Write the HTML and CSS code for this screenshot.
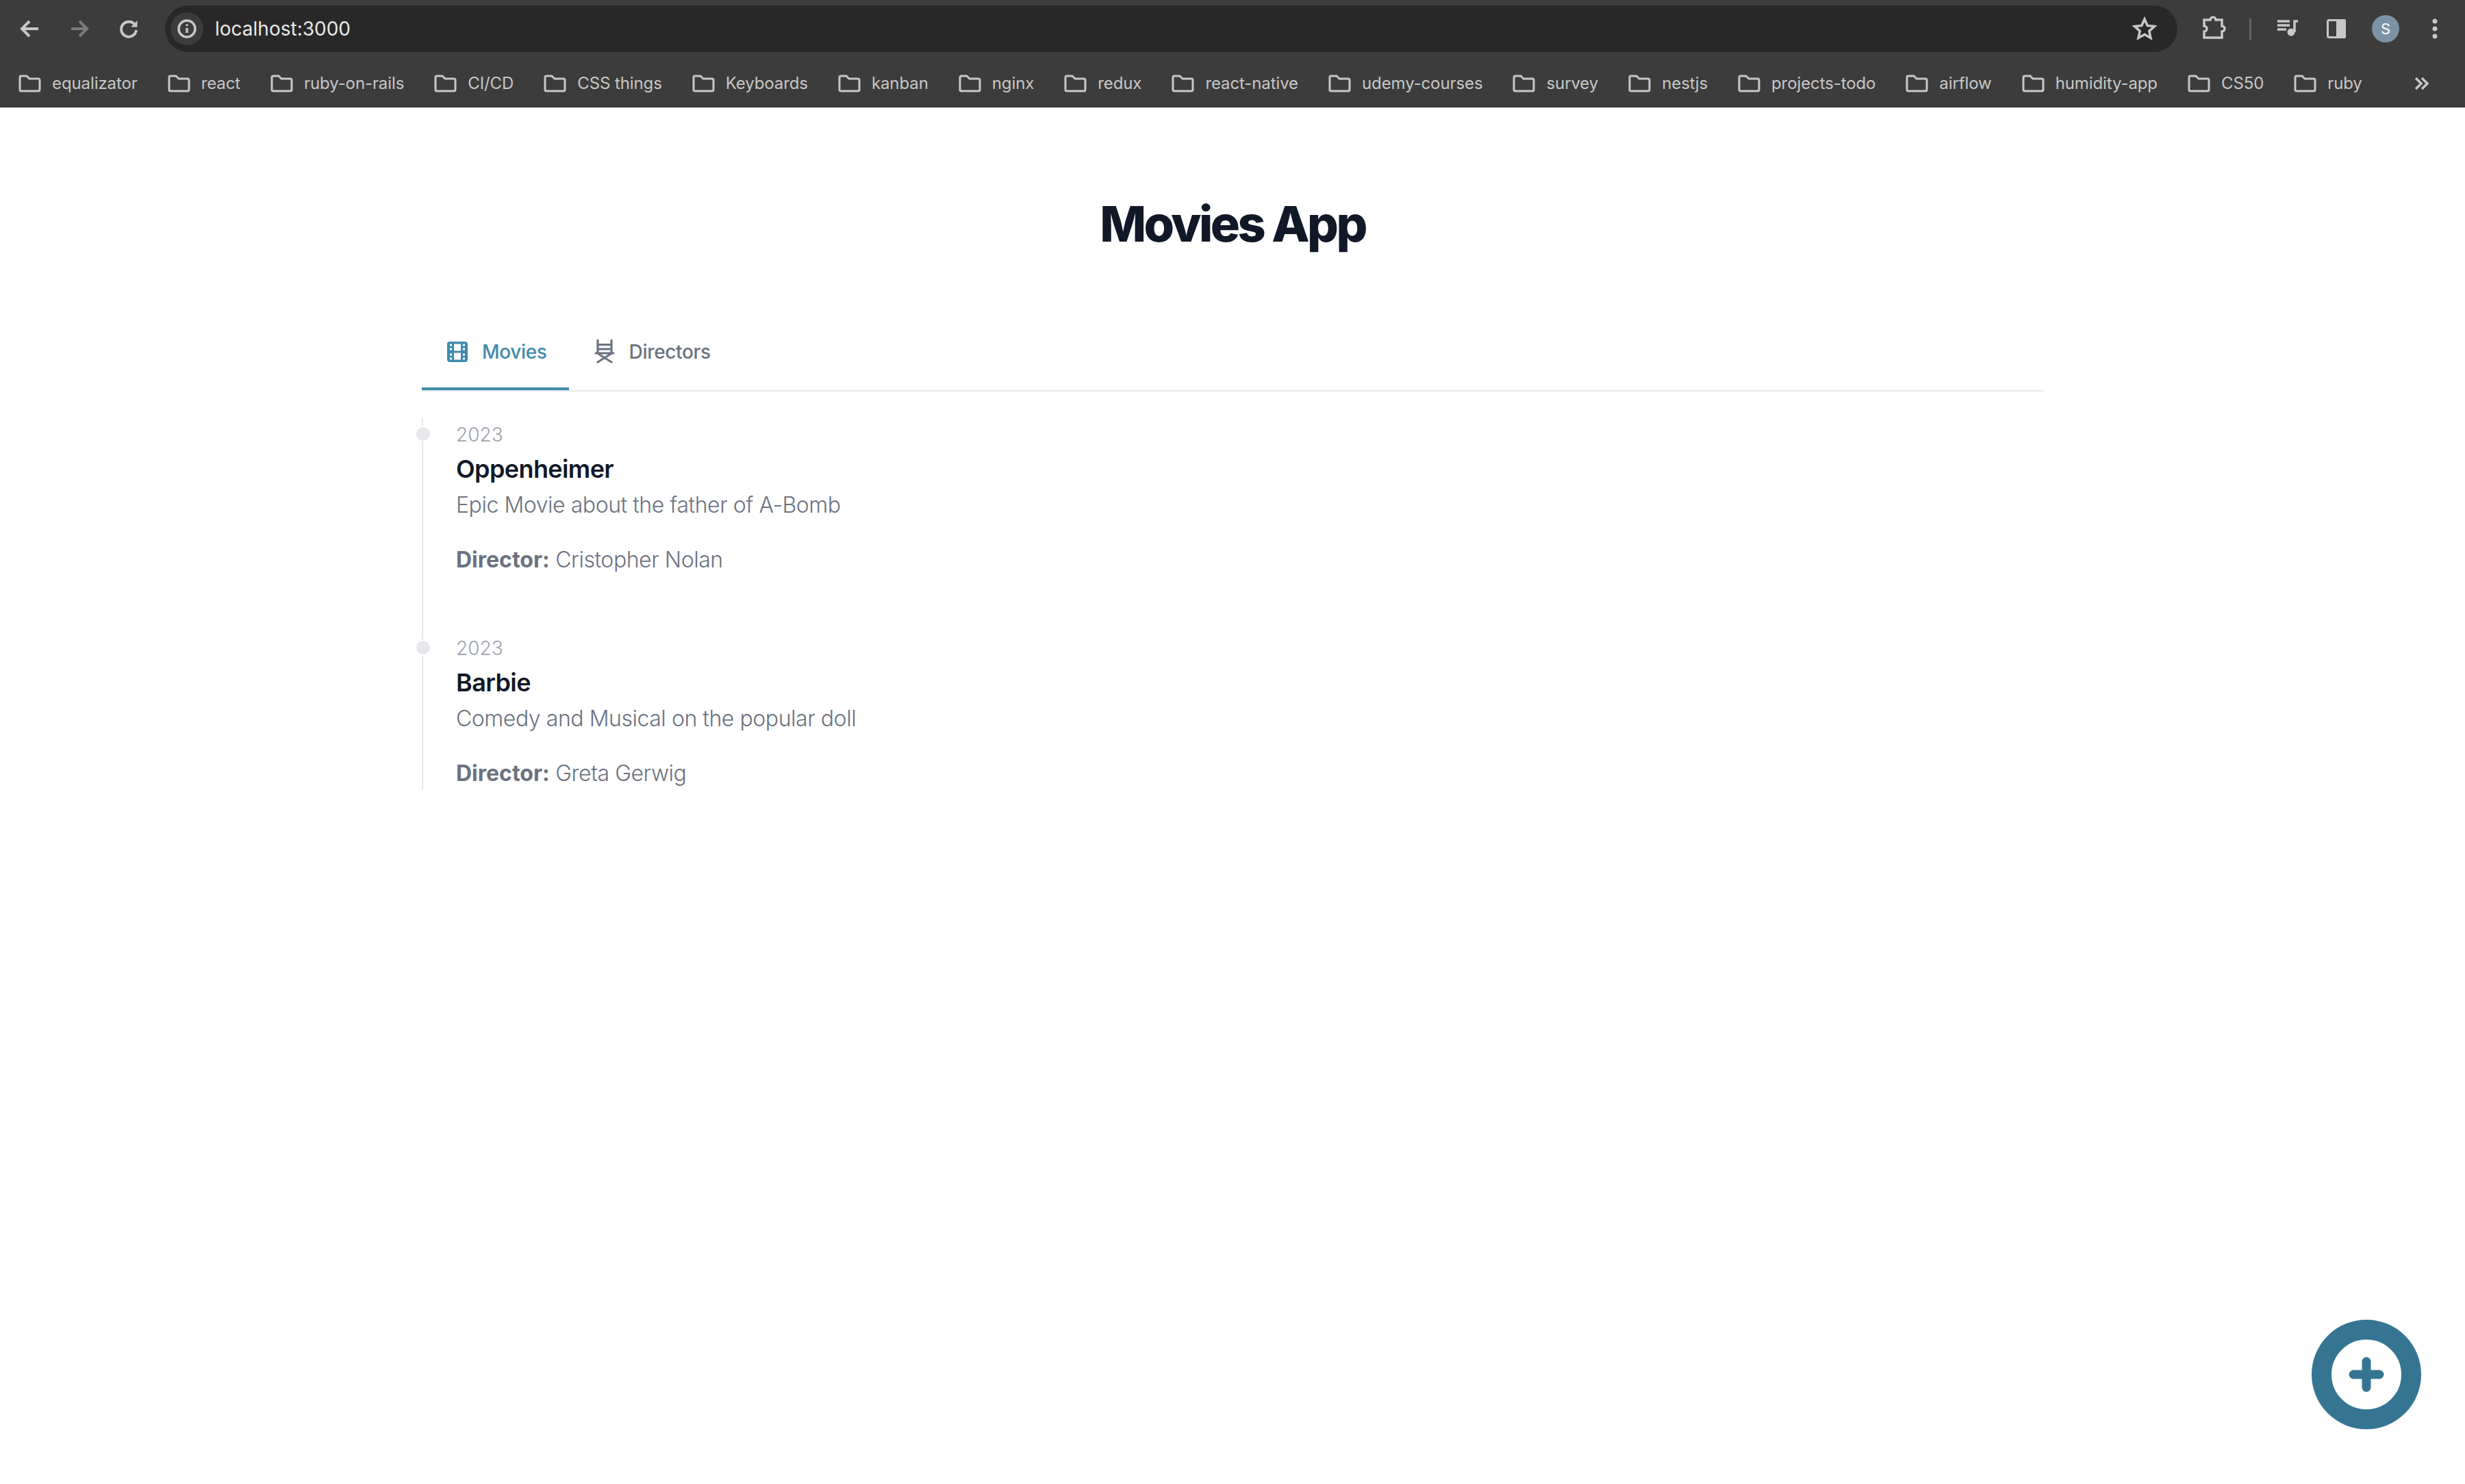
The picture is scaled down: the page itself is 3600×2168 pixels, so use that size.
FILE: index.html
```html
<!DOCTYPE html>
<html lang="en">
<head>
    <meta charset="UTF-8">
    <meta name="viewport" content="width=device-width, initial-scale=1.0">
    <title>Movies App</title>
    <link rel="stylesheet" href="styles.css">
</head>
<body>
    <!-- browser chrome -->
    <div class="browser">
        <div class="toolbar">
            <div class="tool">
                <svg width="40" height="40" viewBox="0 0 40 40" class="stroke"><path d="M32 20H10M19 9 8 20l11 11"/></svg>
            </div>
            <div class="tool dim">
                <svg width="40" height="40" viewBox="0 0 40 40" class="stroke"><path d="M8 20h22M20 9l11 11-11 11"/></svg>
            </div>
            <div class="tool">
                <svg width="40" height="40" viewBox="0 0 40 40" class="stroke"><path d="M29.500 15a11 11 0 1 0 1.500 7"/><path class="solid" d="M32.500 8v9.500H23z"/></svg>
            </div>
            <div class="omnibox">
                <span class="site-info">
                    <svg width="30" height="30" viewBox="0 0 30 30" class="stroke thin"><circle cx="15" cy="15" r="12"/><path d="M15 14v7"/><path d="M15 8.500v2.400"/></svg>
                </span>
                <span class="url">localhost:3000</span>
                <svg class="star stroke thin" width="36" height="36" viewBox="0 0 36 36"><path d="m18 4 4.200 9.400 10.300 1.100-7.700 6.900 2.200 10.100-9-5.200-9 5.200 2.200-10.100-7.700-6.900 10.300-1.100z"/></svg>
            </div>
            <div class="tool">
                <svg width="40" height="40" viewBox="0 0 40 40" class="stroke thin"><path d="M6 7h9a4 4 0 0 1 8 0h9v9a4 4 0 0 1 0 8v9H6v-9a4 4 0 0 0 0-8z"/></svg>
            </div>
            <div class="tool-sep"></div>
            <div class="tool">
                <svg width="40" height="40" viewBox="0 0 40 40" class="stroke thin"><path d="M6 9h18M6 15h18M6 21h13"/><path d="M31 25V9h5"/><circle class="solid" cx="26" cy="25" r="5.500"/></svg>
            </div>
            <div class="tool">
                <svg width="40" height="40" viewBox="0 0 40 40"><rect class="panel-frame" x="7.500" y="7.500" width="25" height="25" rx="2"/><rect class="solid" x="20" y="6" width="14" height="28" rx="2"/></svg>
            </div>
            <div class="tool"><span class="avatar">S</span></div>
            <div class="tool">
                <svg width="40" height="40" viewBox="0 0 40 40"><circle class="solid" cx="20" cy="9" r="3.500"/><circle class="solid" cx="20" cy="20" r="3.500"/><circle class="solid" cx="20" cy="31" r="3.500"/></svg>
            </div>
        </div>

        <div class="bookmarks" id="bookmarks">
            <a class="bookmark"><svg class="folder" viewBox="0 0 33 26"><path d="M2 4a2 2 0 0 1 2-2h8l4 4h13a2 2 0 0 1 2 2v14a2 2 0 0 1-2 2H4a2 2 0 0 1-2-2z"/></svg>equalizator</a>
            <a class="bookmark"><svg class="folder" viewBox="0 0 33 26"><path d="M2 4a2 2 0 0 1 2-2h8l4 4h13a2 2 0 0 1 2 2v14a2 2 0 0 1-2 2H4a2 2 0 0 1-2-2z"/></svg>react</a>
            <a class="bookmark"><svg class="folder" viewBox="0 0 33 26"><path d="M2 4a2 2 0 0 1 2-2h8l4 4h13a2 2 0 0 1 2 2v14a2 2 0 0 1-2 2H4a2 2 0 0 1-2-2z"/></svg>ruby-on-rails</a>
            <a class="bookmark"><svg class="folder" viewBox="0 0 33 26"><path d="M2 4a2 2 0 0 1 2-2h8l4 4h13a2 2 0 0 1 2 2v14a2 2 0 0 1-2 2H4a2 2 0 0 1-2-2z"/></svg>CI/CD</a>
            <a class="bookmark"><svg class="folder" viewBox="0 0 33 26"><path d="M2 4a2 2 0 0 1 2-2h8l4 4h13a2 2 0 0 1 2 2v14a2 2 0 0 1-2 2H4a2 2 0 0 1-2-2z"/></svg>CSS things</a>
            <a class="bookmark"><svg class="folder" viewBox="0 0 33 26"><path d="M2 4a2 2 0 0 1 2-2h8l4 4h13a2 2 0 0 1 2 2v14a2 2 0 0 1-2 2H4a2 2 0 0 1-2-2z"/></svg>Keyboards</a>
            <a class="bookmark"><svg class="folder" viewBox="0 0 33 26"><path d="M2 4a2 2 0 0 1 2-2h8l4 4h13a2 2 0 0 1 2 2v14a2 2 0 0 1-2 2H4a2 2 0 0 1-2-2z"/></svg>kanban</a>
            <a class="bookmark"><svg class="folder" viewBox="0 0 33 26"><path d="M2 4a2 2 0 0 1 2-2h8l4 4h13a2 2 0 0 1 2 2v14a2 2 0 0 1-2 2H4a2 2 0 0 1-2-2z"/></svg>nginx</a>
            <a class="bookmark"><svg class="folder" viewBox="0 0 33 26"><path d="M2 4a2 2 0 0 1 2-2h8l4 4h13a2 2 0 0 1 2 2v14a2 2 0 0 1-2 2H4a2 2 0 0 1-2-2z"/></svg>redux</a>
            <a class="bookmark"><svg class="folder" viewBox="0 0 33 26"><path d="M2 4a2 2 0 0 1 2-2h8l4 4h13a2 2 0 0 1 2 2v14a2 2 0 0 1-2 2H4a2 2 0 0 1-2-2z"/></svg>react-native</a>
            <a class="bookmark"><svg class="folder" viewBox="0 0 33 26"><path d="M2 4a2 2 0 0 1 2-2h8l4 4h13a2 2 0 0 1 2 2v14a2 2 0 0 1-2 2H4a2 2 0 0 1-2-2z"/></svg>udemy-courses</a>
            <a class="bookmark"><svg class="folder" viewBox="0 0 33 26"><path d="M2 4a2 2 0 0 1 2-2h8l4 4h13a2 2 0 0 1 2 2v14a2 2 0 0 1-2 2H4a2 2 0 0 1-2-2z"/></svg>survey</a>
            <a class="bookmark"><svg class="folder" viewBox="0 0 33 26"><path d="M2 4a2 2 0 0 1 2-2h8l4 4h13a2 2 0 0 1 2 2v14a2 2 0 0 1-2 2H4a2 2 0 0 1-2-2z"/></svg>nestjs</a>
            <a class="bookmark"><svg class="folder" viewBox="0 0 33 26"><path d="M2 4a2 2 0 0 1 2-2h8l4 4h13a2 2 0 0 1 2 2v14a2 2 0 0 1-2 2H4a2 2 0 0 1-2-2z"/></svg>projects-todo</a>
            <a class="bookmark"><svg class="folder" viewBox="0 0 33 26"><path d="M2 4a2 2 0 0 1 2-2h8l4 4h13a2 2 0 0 1 2 2v14a2 2 0 0 1-2 2H4a2 2 0 0 1-2-2z"/></svg>airflow</a>
            <a class="bookmark"><svg class="folder" viewBox="0 0 33 26"><path d="M2 4a2 2 0 0 1 2-2h8l4 4h13a2 2 0 0 1 2 2v14a2 2 0 0 1-2 2H4a2 2 0 0 1-2-2z"/></svg>humidity-app</a>
            <a class="bookmark"><svg class="folder" viewBox="0 0 33 26"><path d="M2 4a2 2 0 0 1 2-2h8l4 4h13a2 2 0 0 1 2 2v14a2 2 0 0 1-2 2H4a2 2 0 0 1-2-2z"/></svg>CS50</a>
            <a class="bookmark"><svg class="folder" viewBox="0 0 33 26"><path d="M2 4a2 2 0 0 1 2-2h8l4 4h13a2 2 0 0 1 2 2v14a2 2 0 0 1-2 2H4a2 2 0 0 1-2-2z"/></svg>ruby</a>
            <svg class="more stroke thin" width="26" height="26" viewBox="0 0 26 26"><path d="m5 5 8 8-8 8M14 5l8 8-8 8"/></svg>
        </div>
    </div>

    <!-- the app -->
    <main class="app">
        <h1 class="app-title">Movies App</h1>

        <div class="tabs">
            <a class="tab active">
                <svg class="tab-icon" viewBox="0 0 40 40">
                    <path fill-rule="evenodd" d="M9 5h22a4 4 0 0 1 4 4v22a4 4 0 0 1-4 4H9a4 4 0 0 1-4-4V9a4 4 0 0 1 4-4zM9 8.500v3h3v-3zm0 6v3h3v-3zm0 8v3h3v-3zm0 6v3h3v-3zM28 8.500v3h3v-3zm0 6v3h3v-3zm0 8v3h3v-3zm0 6v3h3v-3zM15 8.500v10h10v-10zm0 13v10h10v-10z"/>
                </svg>
                Movies
            </a>
            <a class="tab">
                <svg class="tab-icon chair" viewBox="0 0 40 40">
                    <path d="M10 3v19M30 3v19M10 9.500h20M10 16h20M7 22h26M11 23l19 12M29 23 10 35"/>
                </svg>
                Directors
            </a>
        </div>

        <ol class="timeline">
            <li class="movie">
                <span class="dot"></span>
                <time class="movie-year">2023</time>
                <h3 class="movie-title">Oppenheimer</h3>
                <p class="movie-desc">Epic Movie about the father of A-Bomb</p>
                <p class="movie-director"><b>Director:</b> Cristopher Nolan</p>
            </li>
            <li class="movie">
                <span class="dot"></span>
                <time class="movie-year">2023</time>
                <h3 class="movie-title">Barbie</h3>
                <p class="movie-desc">Comedy and Musical on the popular doll</p>
                <p class="movie-director"><b>Director:</b> Greta Gerwig</p>
            </li>
        </ol>
    </main>

    <button class="add-button">
        <svg width="52" height="52" viewBox="0 0 52 52"><path d="M26 7v38M7 26h38"/></svg>
    </button>
</body>
</html>
```

FILE: styles.css
```css
* {
    box-sizing: border-box;
}

body {
    margin: 0;
    min-height: 2168px;
    background-color: #fff;
    font-family: Inter, "Noto Sans", sans-serif;
}

/* browser chrome */
.browser {
    height: 157px;
    background-color: #3c3c3c;
    border-bottom: 1px solid #333;
    color: #c7c7c7;
}

.toolbar {
    display: flex;
    align-items: center;
    height: 84px;
    padding: 0 8px;
}

.tool {
    display: flex;
    align-items: center;
    justify-content: center;
    width: 72px;
    height: 72px;
    flex: none;
}

.tool.dim {
    opacity: 0.45;
}

.tool-sep {
    width: 3px;
    height: 31px;
    margin: 0 16px;
    background-color: #666;
    flex: none;
}

.stroke {
    fill: none;
    stroke: #c7c7c7;
    stroke-width: 4;
}

.stroke.thin {
    stroke-width: 3.500;
}

.solid {
    fill: #c7c7c7;
    stroke: none;
}

.panel-frame {
    fill: none;
    stroke: #c7c7c7;
    stroke-width: 3;
}

.omnibox {
    display: flex;
    align-items: center;
    flex: 1;
    height: 68px;
    margin: 0 17px;
    padding: 0 30px 0 8px;
    background-color: #282828;
    border-radius: 34px;
}

.site-info {
    display: flex;
    align-items: center;
    justify-content: center;
    width: 48px;
    height: 48px;
    background-color: #3c3c3c;
    border-radius: 50%;
}

.url {
    flex: 1;
    margin-left: 17px;
    font-size: 28px;
    color: #e8e8e8;
}

.avatar {
    display: flex;
    align-items: center;
    justify-content: center;
    width: 40px;
    height: 40px;
    background-color: #7b93a5;
    border-radius: 50%;
    font-size: 22px;
    color: #fff;
}

.bookmarks {
    display: flex;
    align-items: center;
    height: 72px;
    padding: 3px 51px 0 27px;
    font-size: 24px;
    letter-spacing: -0.1px;
}

.bookmark {
    display: flex;
    align-items: center;
    gap: 16px;
    margin-right: 44px;
    white-space: nowrap;
}

.folder {
    width: 33px;
    height: 26px;
    fill: none;
    stroke: #c7c7c7;
    stroke-width: 3;
}

.more {
    margin-left: auto;
    margin-right: 0;
}

/* app */
.app {
    width: 2368px;
    margin: 0 auto;
}

.app-title {
    margin: 0;
    padding: 130px 0 93px;
    font-size: 72px;
    line-height: 80px;
    font-weight: 800;
    letter-spacing: -0.05em;
    text-align: center;
    color: #111827;
}

.tabs {
    display: flex;
    border-bottom: 2px solid #e5e7eb;
}

.tab {
    display: flex;
    align-items: center;
    gap: 16px;
    height: 110px;
    padding: 2px 32px 0;
    border-bottom: 4px solid transparent;
    font-size: 28px;
    font-weight: 500;
    letter-spacing: -0.012em;
    color: #6b7280;
}

.tab.active {
    color: #408bab;
    border-bottom-color: #408bab;
}

.tab-icon {
    width: 40px;
    height: 40px;
    fill: #408bab;
}

.tab-icon.chair {
    fill: none;
    stroke: #6b7280;
    stroke-width: 3.200;
    stroke-linecap: round;
}

.timeline {
    list-style: none;
    margin: 38px 0 0;
    padding: 11px 0 0 48px;
    border-left: 2px solid #e5e7eb;
}

.movie {
    position: relative;
    margin-bottom: 92px;
}

.movie:last-child {
    margin-bottom: 0;
}

.dot {
    position: absolute;
    top: 1px;
    left: -60px;
    width: 24px;
    height: 24px;
    background-color: #e5e7eb;
    border: 2px solid #fff;
    border-radius: 50%;
}

.movie-year {
    display: block;
    margin-bottom: 8px;
    font-size: 28px;
    line-height: 28px;
    font-weight: 300;
    color: #9ca3af;
}

.movie-title {
    margin: 0;
    font-size: 36px;
    line-height: 56px;
    font-weight: 600;
    letter-spacing: -0.6px;
    color: #111827;
}

.movie-desc,
.movie-director {
    margin: 0;
    padding-top: 1px;
    font-size: 32px;
    line-height: 47px;
    font-weight: 350;
    letter-spacing: -0.45px;
    color: #6b7280;
}

.movie-desc {
    margin-bottom: 32px;
}

.movie-director b {
    font-weight: 700;
    letter-spacing: 0;
}

.add-button {
    position: fixed;
    right: 64px;
    bottom: 80px;
    display: flex;
    align-items: center;
    justify-content: center;
    width: 160px;
    height: 160px;
    padding: 0;
    background-color: #fff;
    border: 29px solid #357592;
    border-radius: 50%;
}

.add-button svg {
    fill: none;
    stroke: #357592;
    stroke-width: 13;
    stroke-linecap: round;
}
```
